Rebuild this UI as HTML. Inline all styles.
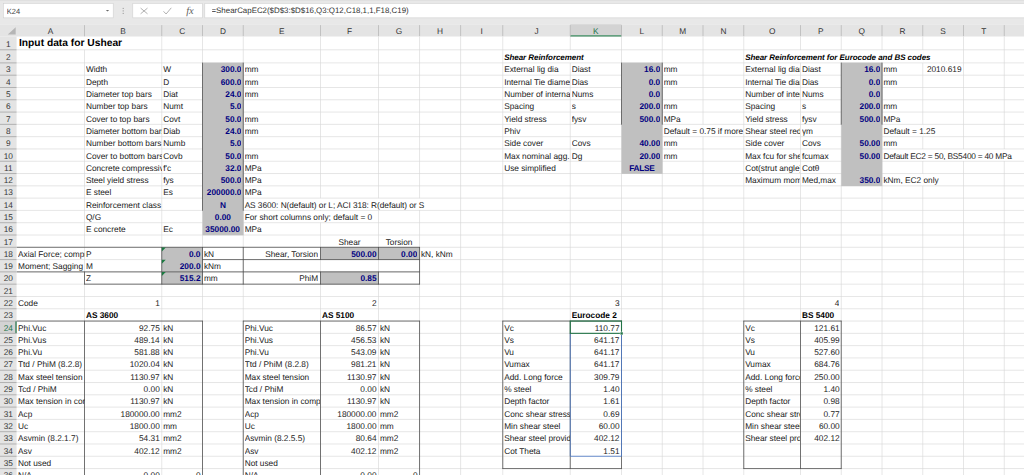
<!DOCTYPE html>
<html lang="en"><head><meta charset="utf-8"><title>Ushear</title>
<style>
html,body{margin:0;padding:0;background:#fff;}
body{width:1024px;height:475px;overflow:hidden;position:relative;font-family:"Liberation Sans",sans-serif;text-rendering:geometricPrecision;}
#s{position:absolute;left:0;top:0;width:1024px;height:475px;overflow:hidden;}
#s svg{position:absolute;left:0;top:0;}
#s div{position:absolute;white-space:nowrap;overflow:hidden;font-size:8.3px;color:#1a1a1a;}
#s .v{font-weight:bold;color:#000080;}
#s .b{font-weight:bold;color:#000;}
#s .bi{font-weight:bold;font-style:italic;color:#000;font-size:8px;letter-spacing:-0.05px;}
#s .hd{color:#363636;}
#s .sel{color:#217346;}
#s .nb{font-size:7.5px;color:#444;}
#s .fx{font-size:7.9px;color:#333;}
#s .fxi{font-family:"Liberation Serif",serif;font-style:italic;font-size:10.4px;color:#5c5c5c;overflow:visible;}
#s .title{font-weight:bold;font-size:10.25px;color:#000;}
</style></head><body><div id="s">
<svg width="1024" height="475" viewBox="0 0 1024 475">
<rect x="0" y="0" width="1024" height="475" fill="#ffffff"/>
<line x1="16.6" y1="49.8" x2="1024" y2="49.8" stroke="#d6d6d6" stroke-width="0.62"/>
<line x1="16.6" y1="62.9" x2="1024" y2="62.9" stroke="#d6d6d6" stroke-width="0.62"/>
<line x1="16.6" y1="75.19" x2="1024" y2="75.19" stroke="#d6d6d6" stroke-width="0.62"/>
<line x1="16.6" y1="87.49" x2="1024" y2="87.49" stroke="#d6d6d6" stroke-width="0.62"/>
<line x1="16.6" y1="99.78" x2="1024" y2="99.78" stroke="#d6d6d6" stroke-width="0.62"/>
<line x1="16.6" y1="112.07" x2="1024" y2="112.07" stroke="#d6d6d6" stroke-width="0.62"/>
<line x1="16.6" y1="124.36" x2="1024" y2="124.36" stroke="#d6d6d6" stroke-width="0.62"/>
<line x1="16.6" y1="136.66" x2="1024" y2="136.66" stroke="#d6d6d6" stroke-width="0.62"/>
<line x1="16.6" y1="148.95" x2="1024" y2="148.95" stroke="#d6d6d6" stroke-width="0.62"/>
<line x1="16.6" y1="161.24" x2="1024" y2="161.24" stroke="#d6d6d6" stroke-width="0.62"/>
<line x1="16.6" y1="173.54" x2="1024" y2="173.54" stroke="#d6d6d6" stroke-width="0.62"/>
<line x1="16.6" y1="185.83" x2="1024" y2="185.83" stroke="#d6d6d6" stroke-width="0.62"/>
<line x1="16.6" y1="198.12" x2="1024" y2="198.12" stroke="#d6d6d6" stroke-width="0.62"/>
<line x1="16.6" y1="210.42" x2="1024" y2="210.42" stroke="#d6d6d6" stroke-width="0.62"/>
<line x1="16.6" y1="222.71" x2="1024" y2="222.71" stroke="#d6d6d6" stroke-width="0.62"/>
<line x1="16.6" y1="235" x2="1024" y2="235" stroke="#d6d6d6" stroke-width="0.62"/>
<line x1="16.6" y1="247.29" x2="1024" y2="247.29" stroke="#d6d6d6" stroke-width="0.62"/>
<line x1="16.6" y1="259.59" x2="1024" y2="259.59" stroke="#d6d6d6" stroke-width="0.62"/>
<line x1="16.6" y1="271.88" x2="1024" y2="271.88" stroke="#d6d6d6" stroke-width="0.62"/>
<line x1="16.6" y1="284.17" x2="1024" y2="284.17" stroke="#d6d6d6" stroke-width="0.62"/>
<line x1="16.6" y1="296.47" x2="1024" y2="296.47" stroke="#d6d6d6" stroke-width="0.62"/>
<line x1="16.6" y1="308.76" x2="1024" y2="308.76" stroke="#d6d6d6" stroke-width="0.62"/>
<line x1="16.6" y1="321.05" x2="1024" y2="321.05" stroke="#d6d6d6" stroke-width="0.62"/>
<line x1="16.6" y1="333.35" x2="1024" y2="333.35" stroke="#d6d6d6" stroke-width="0.62"/>
<line x1="16.6" y1="345.64" x2="1024" y2="345.64" stroke="#d6d6d6" stroke-width="0.62"/>
<line x1="16.6" y1="357.93" x2="1024" y2="357.93" stroke="#d6d6d6" stroke-width="0.62"/>
<line x1="16.6" y1="370.22" x2="1024" y2="370.22" stroke="#d6d6d6" stroke-width="0.62"/>
<line x1="16.6" y1="382.52" x2="1024" y2="382.52" stroke="#d6d6d6" stroke-width="0.62"/>
<line x1="16.6" y1="394.81" x2="1024" y2="394.81" stroke="#d6d6d6" stroke-width="0.62"/>
<line x1="16.6" y1="407.1" x2="1024" y2="407.1" stroke="#d6d6d6" stroke-width="0.62"/>
<line x1="16.6" y1="419.4" x2="1024" y2="419.4" stroke="#d6d6d6" stroke-width="0.62"/>
<line x1="16.6" y1="431.69" x2="1024" y2="431.69" stroke="#d6d6d6" stroke-width="0.62"/>
<line x1="16.6" y1="443.98" x2="1024" y2="443.98" stroke="#d6d6d6" stroke-width="0.62"/>
<line x1="16.6" y1="456.28" x2="1024" y2="456.28" stroke="#d6d6d6" stroke-width="0.62"/>
<line x1="16.6" y1="468.57" x2="1024" y2="468.57" stroke="#d6d6d6" stroke-width="0.62"/>
<line x1="84.5" y1="36.5" x2="84.5" y2="475" stroke="#d6d6d6" stroke-width="0.62"/>
<line x1="161.75" y1="36.5" x2="161.75" y2="475" stroke="#d6d6d6" stroke-width="0.62"/>
<line x1="202.5" y1="36.5" x2="202.5" y2="475" stroke="#d6d6d6" stroke-width="0.62"/>
<line x1="243.25" y1="36.5" x2="243.25" y2="475" stroke="#d6d6d6" stroke-width="0.62"/>
<line x1="320.5" y1="36.5" x2="320.5" y2="475" stroke="#d6d6d6" stroke-width="0.62"/>
<line x1="378.5" y1="36.5" x2="378.5" y2="475" stroke="#d6d6d6" stroke-width="0.62"/>
<line x1="419.55" y1="36.5" x2="419.55" y2="475" stroke="#d6d6d6" stroke-width="0.62"/>
<line x1="460.6" y1="36.5" x2="460.6" y2="475" stroke="#d6d6d6" stroke-width="0.62"/>
<line x1="502.75" y1="36.5" x2="502.75" y2="475" stroke="#d6d6d6" stroke-width="0.62"/>
<line x1="570.25" y1="36.5" x2="570.25" y2="475" stroke="#d6d6d6" stroke-width="0.62"/>
<line x1="621.5" y1="36.5" x2="621.5" y2="475" stroke="#d6d6d6" stroke-width="0.62"/>
<line x1="662.25" y1="36.5" x2="662.25" y2="475" stroke="#d6d6d6" stroke-width="0.62"/>
<line x1="703" y1="36.5" x2="703" y2="475" stroke="#d6d6d6" stroke-width="0.62"/>
<line x1="743.75" y1="36.5" x2="743.75" y2="475" stroke="#d6d6d6" stroke-width="0.62"/>
<line x1="800.5" y1="36.5" x2="800.5" y2="475" stroke="#d6d6d6" stroke-width="0.62"/>
<line x1="841.25" y1="36.5" x2="841.25" y2="475" stroke="#d6d6d6" stroke-width="0.62"/>
<line x1="882" y1="36.5" x2="882" y2="475" stroke="#d6d6d6" stroke-width="0.62"/>
<line x1="922.75" y1="36.5" x2="922.75" y2="475" stroke="#d6d6d6" stroke-width="0.62"/>
<line x1="963.5" y1="36.5" x2="963.5" y2="475" stroke="#d6d6d6" stroke-width="0.62"/>
<line x1="1004.25" y1="36.5" x2="1004.25" y2="475" stroke="#d6d6d6" stroke-width="0.62"/>
<rect x="83.7" y="37" width="1.6" height="12.3" fill="#ffffff"/>
<rect x="569.45" y="50.3" width="1.6" height="12.1" fill="#ffffff"/>
<rect x="799.7" y="50.3" width="1.6" height="12.1" fill="#ffffff"/>
<rect x="840.45" y="50.3" width="1.6" height="12.1" fill="#ffffff"/>
<rect x="881.2" y="50.3" width="1.6" height="12.1" fill="#ffffff"/>
<rect x="921.95" y="50.3" width="1.6" height="12.1" fill="#ffffff"/>
<rect x="702.2" y="124.86" width="1.6" height="11.29" fill="#ffffff"/>
<rect x="921.95" y="124.86" width="1.6" height="11.29" fill="#ffffff"/>
<rect x="921.95" y="149.45" width="1.6" height="11.29" fill="#ffffff"/>
<rect x="962.7" y="149.45" width="1.6" height="11.29" fill="#ffffff"/>
<rect x="1003.45" y="149.45" width="1.6" height="11.29" fill="#ffffff"/>
<rect x="319.7" y="210.92" width="1.6" height="11.29" fill="#ffffff"/>
<rect x="921.95" y="174.04" width="1.6" height="11.29" fill="#ffffff"/>
<rect x="319.7" y="198.62" width="1.6" height="11.29" fill="#ffffff"/>
<rect x="377.7" y="198.62" width="1.6" height="11.29" fill="#ffffff"/>
<rect x="418.75" y="198.62" width="1.6" height="11.29" fill="#ffffff"/>
<rect x="202.5" y="62.6" width="41.05" height="172.7" fill="#c0c0c0"/>
<rect x="621.5" y="62.6" width="41.05" height="111.24" fill="#c0c0c0"/>
<rect x="841.25" y="62.6" width="41.05" height="123.53" fill="#c0c0c0"/>
<rect x="161.75" y="246.99" width="41.05" height="37.48" fill="#c0c0c0"/>
<rect x="320.5" y="246.99" width="58.3" height="12.89" fill="#c0c0c0"/>
<rect x="378.5" y="246.99" width="41.35" height="12.89" fill="#c0c0c0"/>
<rect x="320.5" y="271.58" width="58.3" height="12.89" fill="#c0c0c0"/>
<line x1="202.5" y1="62.6" x2="202.5" y2="210.72" stroke="#4a4a4a" stroke-width="0.75"/>
<line x1="243.25" y1="62.6" x2="243.25" y2="210.72" stroke="#4a4a4a" stroke-width="0.75"/>
<line x1="621.5" y1="62.6" x2="621.5" y2="124.66" stroke="#4a4a4a" stroke-width="0.75"/>
<line x1="662.25" y1="62.6" x2="662.25" y2="124.66" stroke="#4a4a4a" stroke-width="0.75"/>
<line x1="841.25" y1="62.6" x2="841.25" y2="124.66" stroke="#4a4a4a" stroke-width="0.75"/>
<line x1="882" y1="62.6" x2="882" y2="124.66" stroke="#4a4a4a" stroke-width="0.75"/>
<line x1="16.3" y1="247.29" x2="419.85" y2="247.29" stroke="#4a4a4a" stroke-width="0.75"/>
<line x1="202.2" y1="259.59" x2="419.85" y2="259.59" stroke="#4a4a4a" stroke-width="0.75"/>
<line x1="16.3" y1="271.88" x2="419.85" y2="271.88" stroke="#4a4a4a" stroke-width="0.75"/>
<line x1="84.2" y1="284.17" x2="419.85" y2="284.17" stroke="#4a4a4a" stroke-width="0.75"/>
<line x1="84.5" y1="271.58" x2="84.5" y2="284.47" stroke="#4a4a4a" stroke-width="0.75"/>
<line x1="161.75" y1="246.99" x2="161.75" y2="284.47" stroke="#4a4a4a" stroke-width="0.75"/>
<line x1="202.5" y1="246.99" x2="202.5" y2="284.47" stroke="#4a4a4a" stroke-width="0.75"/>
<line x1="243.25" y1="246.99" x2="243.25" y2="284.47" stroke="#4a4a4a" stroke-width="0.75"/>
<line x1="320.5" y1="246.99" x2="320.5" y2="259.89" stroke="#4a4a4a" stroke-width="0.75"/>
<line x1="320.5" y1="271.58" x2="320.5" y2="284.47" stroke="#4a4a4a" stroke-width="0.75"/>
<line x1="378.5" y1="246.99" x2="378.5" y2="259.89" stroke="#4a4a4a" stroke-width="0.75"/>
<line x1="378.5" y1="271.58" x2="378.5" y2="284.47" stroke="#4a4a4a" stroke-width="0.75"/>
<line x1="419.55" y1="246.99" x2="419.55" y2="284.47" stroke="#4a4a4a" stroke-width="0.75"/>
<line x1="16.3" y1="321.05" x2="202.8" y2="321.05" stroke="#4a4a4a" stroke-width="0.75"/>
<line x1="84.5" y1="320.75" x2="84.5" y2="493.45" stroke="#4a4a4a" stroke-width="0.75"/>
<line x1="202.5" y1="320.75" x2="202.5" y2="493.45" stroke="#4a4a4a" stroke-width="0.75"/>
<line x1="242.95" y1="321.05" x2="419.85" y2="321.05" stroke="#4a4a4a" stroke-width="0.75"/>
<line x1="243.25" y1="320.75" x2="243.25" y2="493.45" stroke="#4a4a4a" stroke-width="0.75"/>
<line x1="320.5" y1="320.75" x2="320.5" y2="493.45" stroke="#4a4a4a" stroke-width="0.75"/>
<line x1="419.55" y1="320.75" x2="419.55" y2="493.45" stroke="#4a4a4a" stroke-width="0.75"/>
<line x1="502.45" y1="321.05" x2="621.8" y2="321.05" stroke="#4a4a4a" stroke-width="0.75"/>
<line x1="502.45" y1="468.57" x2="621.8" y2="468.57" stroke="#4a4a4a" stroke-width="0.75"/>
<line x1="502.75" y1="320.75" x2="502.75" y2="468.87" stroke="#4a4a4a" stroke-width="0.75"/>
<line x1="570.25" y1="320.75" x2="570.25" y2="468.87" stroke="#4a4a4a" stroke-width="0.75"/>
<line x1="621.5" y1="320.75" x2="621.5" y2="468.87" stroke="#4a4a4a" stroke-width="0.75"/>
<line x1="743.45" y1="321.05" x2="841.55" y2="321.05" stroke="#4a4a4a" stroke-width="0.75"/>
<line x1="743.45" y1="468.57" x2="841.55" y2="468.57" stroke="#4a4a4a" stroke-width="0.75"/>
<line x1="743.75" y1="320.75" x2="743.75" y2="468.87" stroke="#4a4a4a" stroke-width="0.75"/>
<line x1="800.5" y1="320.75" x2="800.5" y2="468.87" stroke="#4a4a4a" stroke-width="0.75"/>
<line x1="841.25" y1="320.75" x2="841.25" y2="468.87" stroke="#4a4a4a" stroke-width="0.75"/>
<line x1="570.25" y1="333.35" x2="570.25" y2="456.28" stroke="#4a78c8" stroke-width="0.8"/>
<line x1="621.5" y1="333.35" x2="621.5" y2="456.28" stroke="#4a78c8" stroke-width="0.8"/>
<line x1="570.25" y1="456.28" x2="621.5" y2="456.28" stroke="#4a78c8" stroke-width="0.8"/>
<rect x="570.25" y="321.05" width="51.25" height="12.29" fill="none" stroke="#217346" stroke-width="1.1"/>
<rect x="619.9" y="331.75" width="3.2" height="3.2" fill="#ffffff"/>
<rect x="620.4" y="332.25" width="2.4" height="2.4" fill="#217346"/>
<path d="M161.85 247.49h3.9l-3.9 3.9z" fill="#1a7a40"/>
<path d="M161.85 259.79h3.9l-3.9 3.9z" fill="#1a7a40"/>
<path d="M161.85 272.08h3.9l-3.9 3.9z" fill="#1a7a40"/>
<rect x="0" y="0" width="1024" height="24.3" fill="#e8e8e8"/>
<rect x="0" y="0" width="1024" height="0.9" fill="#dfdfdf"/>
<rect x="0" y="24.3" width="1024" height="12.2" fill="#e4e4e4"/>
<rect x="0" y="36.5" width="16.6" height="438.5" fill="#e4e4e4"/>
<rect x="3.3" y="3.3" width="109.9" height="14.55" fill="#ffffff" stroke="#d0d0d0" stroke-width="0.6"/>
<rect x="132.8" y="3.3" width="69.6" height="14.55" fill="#ffffff" stroke="#d0d0d0" stroke-width="0.6"/>
<rect x="204.8" y="3.3" width="821.2" height="14.55" fill="#ffffff" stroke="#d0d0d0" stroke-width="0.6"/>
<path d="M105.8 9.9h3.4l-1.7 1.7z" fill="#6a6a6a"/>
<rect x="122.7" y="7.9" width="1" height="1" fill="#8c8c8c"/>
<rect x="122.7" y="10.4" width="1" height="1" fill="#8c8c8c"/>
<rect x="122.7" y="12.9" width="1" height="1" fill="#8c8c8c"/>
<path d="M140.6 8.1l6.9 5.7M147.5 8.1l-6.9 5.7" stroke="#b2b2b2" stroke-width="1" fill="none"/>
<path d="M163.5 11.3l2.6 2.7l5.2-6.2" stroke="#b2b2b2" stroke-width="1" fill="none"/>
<rect x="570.25" y="24.3" width="51.25" height="12.2" fill="#d3d3d3"/>
<line x1="570.25" y1="35.95" x2="621.5" y2="35.95" stroke="#3f8f63" stroke-width="1.25"/>
<rect x="0" y="321.05" width="16.6" height="12.29" fill="#d3d3d3"/>
<line x1="16" y1="321.05" x2="16" y2="333.35" stroke="#217346" stroke-width="1.2"/>
<line x1="84.5" y1="25.1" x2="84.5" y2="36.2" stroke="#b2b2b2" stroke-width="0.72"/>
<line x1="161.75" y1="25.1" x2="161.75" y2="36.2" stroke="#b2b2b2" stroke-width="0.72"/>
<line x1="202.5" y1="25.1" x2="202.5" y2="36.2" stroke="#b2b2b2" stroke-width="0.72"/>
<line x1="243.25" y1="25.1" x2="243.25" y2="36.2" stroke="#b2b2b2" stroke-width="0.72"/>
<line x1="320.5" y1="25.1" x2="320.5" y2="36.2" stroke="#b2b2b2" stroke-width="0.72"/>
<line x1="378.5" y1="25.1" x2="378.5" y2="36.2" stroke="#b2b2b2" stroke-width="0.72"/>
<line x1="419.55" y1="25.1" x2="419.55" y2="36.2" stroke="#b2b2b2" stroke-width="0.72"/>
<line x1="460.6" y1="25.1" x2="460.6" y2="36.2" stroke="#b2b2b2" stroke-width="0.72"/>
<line x1="502.75" y1="25.1" x2="502.75" y2="36.2" stroke="#b2b2b2" stroke-width="0.72"/>
<line x1="570.25" y1="25.1" x2="570.25" y2="36.2" stroke="#b2b2b2" stroke-width="0.72"/>
<line x1="621.5" y1="25.1" x2="621.5" y2="36.2" stroke="#b2b2b2" stroke-width="0.72"/>
<line x1="662.25" y1="25.1" x2="662.25" y2="36.2" stroke="#b2b2b2" stroke-width="0.72"/>
<line x1="703" y1="25.1" x2="703" y2="36.2" stroke="#b2b2b2" stroke-width="0.72"/>
<line x1="743.75" y1="25.1" x2="743.75" y2="36.2" stroke="#b2b2b2" stroke-width="0.72"/>
<line x1="800.5" y1="25.1" x2="800.5" y2="36.2" stroke="#b2b2b2" stroke-width="0.72"/>
<line x1="841.25" y1="25.1" x2="841.25" y2="36.2" stroke="#b2b2b2" stroke-width="0.72"/>
<line x1="882" y1="25.1" x2="882" y2="36.2" stroke="#b2b2b2" stroke-width="0.72"/>
<line x1="922.75" y1="25.1" x2="922.75" y2="36.2" stroke="#b2b2b2" stroke-width="0.72"/>
<line x1="963.5" y1="25.1" x2="963.5" y2="36.2" stroke="#b2b2b2" stroke-width="0.72"/>
<line x1="1004.25" y1="25.1" x2="1004.25" y2="36.2" stroke="#b2b2b2" stroke-width="0.72"/>
<line x1="0" y1="49.8" x2="16.6" y2="49.8" stroke="#a8a8a8" stroke-width="0.85"/>
<line x1="0" y1="62.9" x2="16.6" y2="62.9" stroke="#a8a8a8" stroke-width="0.85"/>
<line x1="0" y1="75.19" x2="16.6" y2="75.19" stroke="#a8a8a8" stroke-width="0.85"/>
<line x1="0" y1="87.49" x2="16.6" y2="87.49" stroke="#a8a8a8" stroke-width="0.85"/>
<line x1="0" y1="99.78" x2="16.6" y2="99.78" stroke="#a8a8a8" stroke-width="0.85"/>
<line x1="0" y1="112.07" x2="16.6" y2="112.07" stroke="#a8a8a8" stroke-width="0.85"/>
<line x1="0" y1="124.36" x2="16.6" y2="124.36" stroke="#a8a8a8" stroke-width="0.85"/>
<line x1="0" y1="136.66" x2="16.6" y2="136.66" stroke="#a8a8a8" stroke-width="0.85"/>
<line x1="0" y1="148.95" x2="16.6" y2="148.95" stroke="#a8a8a8" stroke-width="0.85"/>
<line x1="0" y1="161.24" x2="16.6" y2="161.24" stroke="#a8a8a8" stroke-width="0.85"/>
<line x1="0" y1="173.54" x2="16.6" y2="173.54" stroke="#a8a8a8" stroke-width="0.85"/>
<line x1="0" y1="185.83" x2="16.6" y2="185.83" stroke="#a8a8a8" stroke-width="0.85"/>
<line x1="0" y1="198.12" x2="16.6" y2="198.12" stroke="#a8a8a8" stroke-width="0.85"/>
<line x1="0" y1="210.42" x2="16.6" y2="210.42" stroke="#a8a8a8" stroke-width="0.85"/>
<line x1="0" y1="222.71" x2="16.6" y2="222.71" stroke="#a8a8a8" stroke-width="0.85"/>
<line x1="0" y1="235" x2="16.6" y2="235" stroke="#a8a8a8" stroke-width="0.85"/>
<line x1="0" y1="247.29" x2="16.6" y2="247.29" stroke="#a8a8a8" stroke-width="0.85"/>
<line x1="0" y1="259.59" x2="16.6" y2="259.59" stroke="#a8a8a8" stroke-width="0.85"/>
<line x1="0" y1="271.88" x2="16.6" y2="271.88" stroke="#a8a8a8" stroke-width="0.85"/>
<line x1="0" y1="284.17" x2="16.6" y2="284.17" stroke="#a8a8a8" stroke-width="0.85"/>
<line x1="0" y1="296.47" x2="16.6" y2="296.47" stroke="#a8a8a8" stroke-width="0.85"/>
<line x1="0" y1="308.76" x2="16.6" y2="308.76" stroke="#a8a8a8" stroke-width="0.85"/>
<line x1="0" y1="321.05" x2="16.6" y2="321.05" stroke="#a8a8a8" stroke-width="0.85"/>
<line x1="0" y1="333.35" x2="16.6" y2="333.35" stroke="#a8a8a8" stroke-width="0.85"/>
<line x1="0" y1="345.64" x2="16.6" y2="345.64" stroke="#a8a8a8" stroke-width="0.85"/>
<line x1="0" y1="357.93" x2="16.6" y2="357.93" stroke="#a8a8a8" stroke-width="0.85"/>
<line x1="0" y1="370.22" x2="16.6" y2="370.22" stroke="#a8a8a8" stroke-width="0.85"/>
<line x1="0" y1="382.52" x2="16.6" y2="382.52" stroke="#a8a8a8" stroke-width="0.85"/>
<line x1="0" y1="394.81" x2="16.6" y2="394.81" stroke="#a8a8a8" stroke-width="0.85"/>
<line x1="0" y1="407.1" x2="16.6" y2="407.1" stroke="#a8a8a8" stroke-width="0.85"/>
<line x1="0" y1="419.4" x2="16.6" y2="419.4" stroke="#a8a8a8" stroke-width="0.85"/>
<line x1="0" y1="431.69" x2="16.6" y2="431.69" stroke="#a8a8a8" stroke-width="0.85"/>
<line x1="0" y1="443.98" x2="16.6" y2="443.98" stroke="#a8a8a8" stroke-width="0.85"/>
<line x1="0" y1="456.28" x2="16.6" y2="456.28" stroke="#a8a8a8" stroke-width="0.85"/>
<line x1="0" y1="468.57" x2="16.6" y2="468.57" stroke="#a8a8a8" stroke-width="0.85"/>
<path d="M15.7 27.2v7.4h-7.9z" fill="#b5b5b5"/>
</svg>
<div class="hd" style="left:16.6px;top:24.9px;width:67.9px;height:12.2px;line-height:12.2px;text-align:center;">A</div>
<div class="hd" style="left:84.5px;top:24.9px;width:77.25px;height:12.2px;line-height:12.2px;text-align:center;">B</div>
<div class="hd" style="left:161.75px;top:24.9px;width:40.75px;height:12.2px;line-height:12.2px;text-align:center;">C</div>
<div class="hd" style="left:202.5px;top:24.9px;width:40.75px;height:12.2px;line-height:12.2px;text-align:center;">D</div>
<div class="hd" style="left:243.25px;top:24.9px;width:77.25px;height:12.2px;line-height:12.2px;text-align:center;">E</div>
<div class="hd" style="left:320.5px;top:24.9px;width:58px;height:12.2px;line-height:12.2px;text-align:center;">F</div>
<div class="hd" style="left:378.5px;top:24.9px;width:41.05px;height:12.2px;line-height:12.2px;text-align:center;">G</div>
<div class="hd" style="left:419.55px;top:24.9px;width:41.05px;height:12.2px;line-height:12.2px;text-align:center;">H</div>
<div class="hd" style="left:460.6px;top:24.9px;width:42.15px;height:12.2px;line-height:12.2px;text-align:center;">I</div>
<div class="hd" style="left:502.75px;top:24.9px;width:67.5px;height:12.2px;line-height:12.2px;text-align:center;">J</div>
<div class="hd sel" style="left:570.25px;top:24.9px;width:51.25px;height:12.2px;line-height:12.2px;text-align:center;">K</div>
<div class="hd" style="left:621.5px;top:24.9px;width:40.75px;height:12.2px;line-height:12.2px;text-align:center;">L</div>
<div class="hd" style="left:662.25px;top:24.9px;width:40.75px;height:12.2px;line-height:12.2px;text-align:center;">M</div>
<div class="hd" style="left:703px;top:24.9px;width:40.75px;height:12.2px;line-height:12.2px;text-align:center;">N</div>
<div class="hd" style="left:743.75px;top:24.9px;width:56.75px;height:12.2px;line-height:12.2px;text-align:center;">O</div>
<div class="hd" style="left:800.5px;top:24.9px;width:40.75px;height:12.2px;line-height:12.2px;text-align:center;">P</div>
<div class="hd" style="left:841.25px;top:24.9px;width:40.75px;height:12.2px;line-height:12.2px;text-align:center;">Q</div>
<div class="hd" style="left:882px;top:24.9px;width:40.75px;height:12.2px;line-height:12.2px;text-align:center;">R</div>
<div class="hd" style="left:922.75px;top:24.9px;width:40.75px;height:12.2px;line-height:12.2px;text-align:center;">S</div>
<div class="hd" style="left:963.5px;top:24.9px;width:40.75px;height:12.2px;line-height:12.2px;text-align:center;">T</div>
<div class="hd" style="left:0px;top:37.95px;width:16.6px;height:13.3px;line-height:13.3px;text-align:center;">1</div>
<div class="hd" style="left:0px;top:51.25px;width:16.6px;height:13.1px;line-height:13.1px;text-align:center;">2</div>
<div class="hd" style="left:0px;top:63.45px;width:16.6px;height:12.29px;line-height:12.29px;text-align:center;">3</div>
<div class="hd" style="left:0px;top:75.74px;width:16.6px;height:12.29px;line-height:12.29px;text-align:center;">4</div>
<div class="hd" style="left:0px;top:88.04px;width:16.6px;height:12.29px;line-height:12.29px;text-align:center;">5</div>
<div class="hd" style="left:0px;top:100.33px;width:16.6px;height:12.29px;line-height:12.29px;text-align:center;">6</div>
<div class="hd" style="left:0px;top:112.62px;width:16.6px;height:12.29px;line-height:12.29px;text-align:center;">7</div>
<div class="hd" style="left:0px;top:124.91px;width:16.6px;height:12.29px;line-height:12.29px;text-align:center;">8</div>
<div class="hd" style="left:0px;top:137.21px;width:16.6px;height:12.29px;line-height:12.29px;text-align:center;">9</div>
<div class="hd" style="left:0px;top:149.5px;width:16.6px;height:12.29px;line-height:12.29px;text-align:center;">10</div>
<div class="hd" style="left:0px;top:161.79px;width:16.6px;height:12.29px;line-height:12.29px;text-align:center;">11</div>
<div class="hd" style="left:0px;top:174.09px;width:16.6px;height:12.29px;line-height:12.29px;text-align:center;">12</div>
<div class="hd" style="left:0px;top:186.38px;width:16.6px;height:12.29px;line-height:12.29px;text-align:center;">13</div>
<div class="hd" style="left:0px;top:198.67px;width:16.6px;height:12.29px;line-height:12.29px;text-align:center;">14</div>
<div class="hd" style="left:0px;top:210.97px;width:16.6px;height:12.29px;line-height:12.29px;text-align:center;">15</div>
<div class="hd" style="left:0px;top:223.26px;width:16.6px;height:12.29px;line-height:12.29px;text-align:center;">16</div>
<div class="hd" style="left:0px;top:235.55px;width:16.6px;height:12.29px;line-height:12.29px;text-align:center;">17</div>
<div class="hd" style="left:0px;top:247.84px;width:16.6px;height:12.29px;line-height:12.29px;text-align:center;">18</div>
<div class="hd" style="left:0px;top:260.14px;width:16.6px;height:12.29px;line-height:12.29px;text-align:center;">19</div>
<div class="hd" style="left:0px;top:272.43px;width:16.6px;height:12.29px;line-height:12.29px;text-align:center;">20</div>
<div class="hd" style="left:0px;top:284.72px;width:16.6px;height:12.29px;line-height:12.29px;text-align:center;">21</div>
<div class="hd" style="left:0px;top:297.02px;width:16.6px;height:12.29px;line-height:12.29px;text-align:center;">22</div>
<div class="hd" style="left:0px;top:309.31px;width:16.6px;height:12.29px;line-height:12.29px;text-align:center;">23</div>
<div class="hd sel" style="left:0px;top:321.6px;width:16.6px;height:12.29px;line-height:12.29px;text-align:center;">24</div>
<div class="hd" style="left:0px;top:333.9px;width:16.6px;height:12.29px;line-height:12.29px;text-align:center;">25</div>
<div class="hd" style="left:0px;top:346.19px;width:16.6px;height:12.29px;line-height:12.29px;text-align:center;">26</div>
<div class="hd" style="left:0px;top:358.48px;width:16.6px;height:12.29px;line-height:12.29px;text-align:center;">27</div>
<div class="hd" style="left:0px;top:370.77px;width:16.6px;height:12.29px;line-height:12.29px;text-align:center;">28</div>
<div class="hd" style="left:0px;top:383.07px;width:16.6px;height:12.29px;line-height:12.29px;text-align:center;">29</div>
<div class="hd" style="left:0px;top:395.36px;width:16.6px;height:12.29px;line-height:12.29px;text-align:center;">30</div>
<div class="hd" style="left:0px;top:407.65px;width:16.6px;height:12.29px;line-height:12.29px;text-align:center;">31</div>
<div class="hd" style="left:0px;top:419.95px;width:16.6px;height:12.29px;line-height:12.29px;text-align:center;">32</div>
<div class="hd" style="left:0px;top:432.24px;width:16.6px;height:12.29px;line-height:12.29px;text-align:center;">33</div>
<div class="hd" style="left:0px;top:444.53px;width:16.6px;height:12.29px;line-height:12.29px;text-align:center;">34</div>
<div class="hd" style="left:0px;top:456.83px;width:16.6px;height:12.29px;line-height:12.29px;text-align:center;">35</div>
<div class="hd" style="left:0px;top:469.12px;width:16.6px;height:12.29px;line-height:12.29px;text-align:center;">36</div>
<div class="nb" style="left:6.8px;top:4.7px;width:80px;height:14.3px;line-height:14.3px;">K24</div>
<div class="fx" style="left:211.5px;top:4.3px;width:400px;height:14.3px;line-height:14.3px;">=ShearCapEC2($D$3:$D$16,Q3:Q12,C18,1,1,F18,C19)</div>
<div class="fxi" style="left:186.2px;top:4.5px;width:12px;height:14.5px;line-height:14.5px;">fx</div>
<div class="title" style="left:19px;top:37.2px;width:200px;height:13.3px;line-height:13.3px;overflow:visible;">Input data for Ushear</div>
<div style="left:85.9px;top:63.45px;width:75.85px;height:12.29px;line-height:12.29px;">Width</div>
<div style="left:163.15px;top:63.45px;width:39.35px;height:12.29px;line-height:12.29px;">W</div>
<div class="v" style="left:202.5px;top:63.45px;width:38.95px;height:12.29px;line-height:12.29px;text-align:right;">300.0</div>
<div style="left:244.65px;top:63.45px;width:75.85px;height:12.29px;line-height:12.29px;">mm</div>
<div style="left:85.9px;top:75.74px;width:75.85px;height:12.29px;line-height:12.29px;">Depth</div>
<div style="left:163.15px;top:75.74px;width:39.35px;height:12.29px;line-height:12.29px;">D</div>
<div class="v" style="left:202.5px;top:75.74px;width:38.95px;height:12.29px;line-height:12.29px;text-align:right;">600.0</div>
<div style="left:244.65px;top:75.74px;width:75.85px;height:12.29px;line-height:12.29px;">mm</div>
<div style="left:85.9px;top:88.04px;width:75.85px;height:12.29px;line-height:12.29px;">Diameter top bars</div>
<div style="left:163.15px;top:88.04px;width:39.35px;height:12.29px;line-height:12.29px;">Diat</div>
<div class="v" style="left:202.5px;top:88.04px;width:38.95px;height:12.29px;line-height:12.29px;text-align:right;">24.0</div>
<div style="left:244.65px;top:88.04px;width:75.85px;height:12.29px;line-height:12.29px;">mm</div>
<div style="left:85.9px;top:100.33px;width:75.85px;height:12.29px;line-height:12.29px;">Number top bars</div>
<div style="left:163.15px;top:100.33px;width:39.35px;height:12.29px;line-height:12.29px;">Numt</div>
<div class="v" style="left:202.5px;top:100.33px;width:38.95px;height:12.29px;line-height:12.29px;text-align:right;">5.0</div>
<div style="left:85.9px;top:112.62px;width:75.85px;height:12.29px;line-height:12.29px;">Cover to top bars</div>
<div style="left:163.15px;top:112.62px;width:39.35px;height:12.29px;line-height:12.29px;">Covt</div>
<div class="v" style="left:202.5px;top:112.62px;width:38.95px;height:12.29px;line-height:12.29px;text-align:right;">50.0</div>
<div style="left:244.65px;top:112.62px;width:75.85px;height:12.29px;line-height:12.29px;">mm</div>
<div style="left:85.9px;top:124.91px;width:75.85px;height:12.29px;line-height:12.29px;">Diameter bottom bars</div>
<div style="left:163.15px;top:124.91px;width:39.35px;height:12.29px;line-height:12.29px;">Diab</div>
<div class="v" style="left:202.5px;top:124.91px;width:38.95px;height:12.29px;line-height:12.29px;text-align:right;">24.0</div>
<div style="left:244.65px;top:124.91px;width:75.85px;height:12.29px;line-height:12.29px;">mm</div>
<div style="left:85.9px;top:137.21px;width:75.85px;height:12.29px;line-height:12.29px;">Number bottom bars</div>
<div style="left:163.15px;top:137.21px;width:39.35px;height:12.29px;line-height:12.29px;">Numb</div>
<div class="v" style="left:202.5px;top:137.21px;width:38.95px;height:12.29px;line-height:12.29px;text-align:right;">5.0</div>
<div style="left:85.9px;top:149.5px;width:75.85px;height:12.29px;line-height:12.29px;">Cover to bottom bars</div>
<div style="left:163.15px;top:149.5px;width:39.35px;height:12.29px;line-height:12.29px;">Covb</div>
<div class="v" style="left:202.5px;top:149.5px;width:38.95px;height:12.29px;line-height:12.29px;text-align:right;">50.0</div>
<div style="left:244.65px;top:149.5px;width:75.85px;height:12.29px;line-height:12.29px;">mm</div>
<div style="left:85.9px;top:161.79px;width:75.85px;height:12.29px;line-height:12.29px;">Concrete compressive strength</div>
<div style="left:163.15px;top:161.79px;width:39.35px;height:12.29px;line-height:12.29px;">f'c</div>
<div class="v" style="left:202.5px;top:161.79px;width:38.95px;height:12.29px;line-height:12.29px;text-align:right;">32.0</div>
<div style="left:244.65px;top:161.79px;width:75.85px;height:12.29px;line-height:12.29px;">MPa</div>
<div style="left:85.9px;top:174.09px;width:75.85px;height:12.29px;line-height:12.29px;">Steel yield stress</div>
<div style="left:163.15px;top:174.09px;width:39.35px;height:12.29px;line-height:12.29px;">fys</div>
<div class="v" style="left:202.5px;top:174.09px;width:38.95px;height:12.29px;line-height:12.29px;text-align:right;">500.0</div>
<div style="left:244.65px;top:174.09px;width:75.85px;height:12.29px;line-height:12.29px;">MPa</div>
<div style="left:85.9px;top:186.38px;width:75.85px;height:12.29px;line-height:12.29px;">E steel</div>
<div style="left:163.15px;top:186.38px;width:39.35px;height:12.29px;line-height:12.29px;">Es</div>
<div class="v" style="left:202.5px;top:186.38px;width:38.95px;height:12.29px;line-height:12.29px;text-align:right;">200000.0</div>
<div style="left:244.65px;top:186.38px;width:75.85px;height:12.29px;line-height:12.29px;">MPa</div>
<div style="left:85.9px;top:223.26px;width:75.85px;height:12.29px;line-height:12.29px;">E concrete</div>
<div style="left:163.15px;top:223.26px;width:39.35px;height:12.29px;line-height:12.29px;">Ec</div>
<div class="v" style="left:202.5px;top:223.26px;width:37.45px;height:12.29px;line-height:12.29px;text-align:right;">35000.00</div>
<div style="left:244.65px;top:223.26px;width:75.85px;height:12.29px;line-height:12.29px;">MPa</div>
<div style="left:85.9px;top:198.67px;width:75.85px;height:12.29px;line-height:12.29px;">Reinforcement class</div>
<div class="v" style="left:202.5px;top:198.67px;width:40.75px;height:12.29px;line-height:12.29px;text-align:center;">N</div>
<div style="left:244.65px;top:198.67px;width:215.95px;height:12.29px;line-height:12.29px;overflow:visible;letter-spacing:-0.05px;">AS 3600: N(default) or L; ACI 318: R(default) or S</div>
<div style="left:85.9px;top:210.97px;width:75.85px;height:12.29px;line-height:12.29px;">Q/G</div>
<div class="v" style="left:202.5px;top:210.97px;width:40.75px;height:12.29px;line-height:12.29px;text-align:center;">0.00</div>
<div style="left:244.65px;top:210.97px;width:174.9px;height:12.29px;line-height:12.29px;overflow:visible;">For short columns only; default = 0</div>
<div style="left:320.5px;top:235.55px;width:58px;height:12.29px;line-height:12.29px;text-align:center;">Shear</div>
<div style="left:378.5px;top:235.55px;width:41.05px;height:12.29px;line-height:12.29px;text-align:center;">Torsion</div>
<div style="left:18px;top:247.84px;width:66.5px;height:12.29px;line-height:12.29px;">Axial Force; compression positive</div>
<div style="left:85.9px;top:247.84px;width:75.85px;height:12.29px;line-height:12.29px;">P</div>
<div class="v" style="left:161.75px;top:247.84px;width:38.75px;height:12.29px;line-height:12.29px;text-align:right;">0.0</div>
<div style="left:203.9px;top:247.84px;width:39.35px;height:12.29px;line-height:12.29px;">kN</div>
<div style="left:243.25px;top:247.84px;width:74.85px;height:12.29px;line-height:12.29px;text-align:right;">Shear, Torsion</div>
<div class="v" style="left:320.5px;top:247.84px;width:56.1px;height:12.29px;line-height:12.29px;text-align:right;">500.00</div>
<div class="v" style="left:378.5px;top:247.84px;width:38.75px;height:12.29px;line-height:12.29px;text-align:right;">0.00</div>
<div style="left:420.95px;top:247.84px;width:39.65px;height:12.29px;line-height:12.29px;overflow:visible;">kN, kNm</div>
<div style="left:18px;top:260.14px;width:66.5px;height:12.29px;line-height:12.29px;">Moment; Sagging positive</div>
<div style="left:85.9px;top:260.14px;width:75.85px;height:12.29px;line-height:12.29px;">M</div>
<div class="v" style="left:161.75px;top:260.14px;width:38.75px;height:12.29px;line-height:12.29px;text-align:right;">200.0</div>
<div style="left:203.9px;top:260.14px;width:39.35px;height:12.29px;line-height:12.29px;">kNm</div>
<div style="left:85.9px;top:272.43px;width:75.85px;height:12.29px;line-height:12.29px;">Z</div>
<div class="v" style="left:161.75px;top:272.43px;width:38.75px;height:12.29px;line-height:12.29px;text-align:right;">515.2</div>
<div style="left:203.9px;top:272.43px;width:39.35px;height:12.29px;line-height:12.29px;">mm</div>
<div style="left:243.25px;top:272.43px;width:74.85px;height:12.29px;line-height:12.29px;text-align:right;">PhiM</div>
<div class="v" style="left:320.5px;top:272.43px;width:56.1px;height:12.29px;line-height:12.29px;text-align:right;">0.85</div>
<div style="left:18px;top:297.02px;width:66.5px;height:12.29px;line-height:12.29px;">Code</div>
<div style="left:84.5px;top:297.02px;width:75.25px;height:12.29px;line-height:12.29px;text-align:right;">1</div>
<div style="left:320.5px;top:297.02px;width:56px;height:12.29px;line-height:12.29px;text-align:right;">2</div>
<div style="left:570.25px;top:297.02px;width:49.25px;height:12.29px;line-height:12.29px;text-align:right;">3</div>
<div style="left:800.5px;top:297.02px;width:38.75px;height:12.29px;line-height:12.29px;text-align:right;">4</div>
<div class="b" style="left:85.9px;top:309.31px;width:75.85px;height:12.29px;line-height:12.29px;">AS 3600</div>
<div class="b" style="left:321.9px;top:309.31px;width:56.6px;height:12.29px;line-height:12.29px;">AS 5100</div>
<div class="b" style="left:571.65px;top:309.31px;width:49.85px;height:12.29px;line-height:12.29px;">Eurocode 2</div>
<div class="b" style="left:801.9px;top:309.31px;width:39.35px;height:12.29px;line-height:12.29px;">BS 5400</div>
<div style="left:18px;top:321.6px;width:66.5px;height:12.29px;line-height:12.29px;">Phi.Vuc</div>
<div style="left:84.5px;top:321.6px;width:75.25px;height:12.29px;line-height:12.29px;text-align:right;">92.75</div>
<div style="left:163.15px;top:321.6px;width:39.35px;height:12.29px;line-height:12.29px;">kN</div>
<div style="left:244.65px;top:321.6px;width:75.85px;height:12.29px;line-height:12.29px;">Phi.Vuc</div>
<div style="left:320.5px;top:321.6px;width:56px;height:12.29px;line-height:12.29px;text-align:right;">86.57</div>
<div style="left:379.9px;top:321.6px;width:39.65px;height:12.29px;line-height:12.29px;">kN</div>
<div style="left:18px;top:333.9px;width:66.5px;height:12.29px;line-height:12.29px;">Phi.Vus</div>
<div style="left:84.5px;top:333.9px;width:75.25px;height:12.29px;line-height:12.29px;text-align:right;">489.14</div>
<div style="left:163.15px;top:333.9px;width:39.35px;height:12.29px;line-height:12.29px;">kN</div>
<div style="left:244.65px;top:333.9px;width:75.85px;height:12.29px;line-height:12.29px;">Phi.Vus</div>
<div style="left:320.5px;top:333.9px;width:56px;height:12.29px;line-height:12.29px;text-align:right;">456.53</div>
<div style="left:379.9px;top:333.9px;width:39.65px;height:12.29px;line-height:12.29px;">kN</div>
<div style="left:18px;top:346.19px;width:66.5px;height:12.29px;line-height:12.29px;">Phi.Vu</div>
<div style="left:84.5px;top:346.19px;width:75.25px;height:12.29px;line-height:12.29px;text-align:right;">581.88</div>
<div style="left:163.15px;top:346.19px;width:39.35px;height:12.29px;line-height:12.29px;">kN</div>
<div style="left:244.65px;top:346.19px;width:75.85px;height:12.29px;line-height:12.29px;">Phi.Vu</div>
<div style="left:320.5px;top:346.19px;width:56px;height:12.29px;line-height:12.29px;text-align:right;">543.09</div>
<div style="left:379.9px;top:346.19px;width:39.65px;height:12.29px;line-height:12.29px;">kN</div>
<div style="left:18px;top:358.48px;width:66.5px;height:12.29px;line-height:12.29px;">Ttd / PhiM (8.2.8)</div>
<div style="left:84.5px;top:358.48px;width:75.25px;height:12.29px;line-height:12.29px;text-align:right;">1020.04</div>
<div style="left:163.15px;top:358.48px;width:39.35px;height:12.29px;line-height:12.29px;">kN</div>
<div style="left:244.65px;top:358.48px;width:75.85px;height:12.29px;line-height:12.29px;">Ttd / PhiM (8.2.8)</div>
<div style="left:320.5px;top:358.48px;width:56px;height:12.29px;line-height:12.29px;text-align:right;">981.21</div>
<div style="left:379.9px;top:358.48px;width:39.65px;height:12.29px;line-height:12.29px;">kN</div>
<div style="left:18px;top:370.77px;width:66.5px;height:12.29px;line-height:12.29px;">Max steel tension</div>
<div style="left:84.5px;top:370.77px;width:75.25px;height:12.29px;line-height:12.29px;text-align:right;">1130.97</div>
<div style="left:163.15px;top:370.77px;width:39.35px;height:12.29px;line-height:12.29px;">kN</div>
<div style="left:244.65px;top:370.77px;width:75.85px;height:12.29px;line-height:12.29px;">Max steel tension</div>
<div style="left:320.5px;top:370.77px;width:56px;height:12.29px;line-height:12.29px;text-align:right;">1130.97</div>
<div style="left:379.9px;top:370.77px;width:39.65px;height:12.29px;line-height:12.29px;">kN</div>
<div style="left:18px;top:383.07px;width:66.5px;height:12.29px;line-height:12.29px;">Tcd / PhiM</div>
<div style="left:84.5px;top:383.07px;width:75.25px;height:12.29px;line-height:12.29px;text-align:right;">0.00</div>
<div style="left:163.15px;top:383.07px;width:39.35px;height:12.29px;line-height:12.29px;">kN</div>
<div style="left:244.65px;top:383.07px;width:75.85px;height:12.29px;line-height:12.29px;">Tcd / PhiM</div>
<div style="left:320.5px;top:383.07px;width:56px;height:12.29px;line-height:12.29px;text-align:right;">0.00</div>
<div style="left:379.9px;top:383.07px;width:39.65px;height:12.29px;line-height:12.29px;">kN</div>
<div style="left:18px;top:395.36px;width:66.5px;height:12.29px;line-height:12.29px;">Max tension in compression steel</div>
<div style="left:84.5px;top:395.36px;width:75.25px;height:12.29px;line-height:12.29px;text-align:right;">1130.97</div>
<div style="left:163.15px;top:395.36px;width:39.35px;height:12.29px;line-height:12.29px;">kN</div>
<div style="left:244.65px;top:395.36px;width:75.85px;height:12.29px;line-height:12.29px;">Max tension in compression steel</div>
<div style="left:320.5px;top:395.36px;width:56px;height:12.29px;line-height:12.29px;text-align:right;">1130.97</div>
<div style="left:379.9px;top:395.36px;width:39.65px;height:12.29px;line-height:12.29px;">kN</div>
<div style="left:18px;top:407.65px;width:66.5px;height:12.29px;line-height:12.29px;">Acp</div>
<div style="left:84.5px;top:407.65px;width:75.25px;height:12.29px;line-height:12.29px;text-align:right;">180000.00</div>
<div style="left:163.15px;top:407.65px;width:39.35px;height:12.29px;line-height:12.29px;">mm2</div>
<div style="left:244.65px;top:407.65px;width:75.85px;height:12.29px;line-height:12.29px;">Acp</div>
<div style="left:320.5px;top:407.65px;width:56px;height:12.29px;line-height:12.29px;text-align:right;">180000.00</div>
<div style="left:379.9px;top:407.65px;width:39.65px;height:12.29px;line-height:12.29px;">mm2</div>
<div style="left:18px;top:419.95px;width:66.5px;height:12.29px;line-height:12.29px;">Uc</div>
<div style="left:84.5px;top:419.95px;width:75.25px;height:12.29px;line-height:12.29px;text-align:right;">1800.00</div>
<div style="left:163.15px;top:419.95px;width:39.35px;height:12.29px;line-height:12.29px;">mm</div>
<div style="left:244.65px;top:419.95px;width:75.85px;height:12.29px;line-height:12.29px;">Uc</div>
<div style="left:320.5px;top:419.95px;width:56px;height:12.29px;line-height:12.29px;text-align:right;">1800.00</div>
<div style="left:379.9px;top:419.95px;width:39.65px;height:12.29px;line-height:12.29px;">mm</div>
<div style="left:18px;top:432.24px;width:66.5px;height:12.29px;line-height:12.29px;">Asvmin (8.2.1.7)</div>
<div style="left:84.5px;top:432.24px;width:75.25px;height:12.29px;line-height:12.29px;text-align:right;">54.31</div>
<div style="left:163.15px;top:432.24px;width:39.35px;height:12.29px;line-height:12.29px;">mm2</div>
<div style="left:244.65px;top:432.24px;width:75.85px;height:12.29px;line-height:12.29px;">Asvmin (8.2.5.5)</div>
<div style="left:320.5px;top:432.24px;width:56px;height:12.29px;line-height:12.29px;text-align:right;">80.64</div>
<div style="left:379.9px;top:432.24px;width:39.65px;height:12.29px;line-height:12.29px;">mm2</div>
<div style="left:18px;top:444.53px;width:66.5px;height:12.29px;line-height:12.29px;">Asv</div>
<div style="left:84.5px;top:444.53px;width:75.25px;height:12.29px;line-height:12.29px;text-align:right;">402.12</div>
<div style="left:163.15px;top:444.53px;width:39.35px;height:12.29px;line-height:12.29px;">mm2</div>
<div style="left:244.65px;top:444.53px;width:75.85px;height:12.29px;line-height:12.29px;">Asv</div>
<div style="left:320.5px;top:444.53px;width:56px;height:12.29px;line-height:12.29px;text-align:right;">402.12</div>
<div style="left:379.9px;top:444.53px;width:39.65px;height:12.29px;line-height:12.29px;">mm2</div>
<div style="left:18px;top:456.83px;width:66.5px;height:12.29px;line-height:12.29px;">Not used</div>
<div style="left:244.65px;top:456.83px;width:75.85px;height:12.29px;line-height:12.29px;">Not used</div>
<div style="left:18px;top:469.12px;width:66.5px;height:12.29px;line-height:12.29px;">N/A</div>
<div style="left:84.5px;top:469.12px;width:75.25px;height:12.29px;line-height:12.29px;text-align:right;">0.00</div>
<div style="left:244.65px;top:469.12px;width:75.85px;height:12.29px;line-height:12.29px;">N/A</div>
<div style="left:320.5px;top:469.12px;width:56px;height:12.29px;line-height:12.29px;text-align:right;">0.00</div>
<div style="left:161.75px;top:469.12px;width:38.75px;height:12.29px;line-height:12.29px;text-align:right;">0</div>
<div style="left:378.5px;top:469.12px;width:39.05px;height:12.29px;line-height:12.29px;text-align:right;">0</div>
<div class="bi" style="left:504.15px;top:51.05px;width:117.35px;height:13.1px;line-height:13.1px;overflow:visible;">Shear Reinforcement</div>
<div class="bi" style="left:745.15px;top:51.05px;width:218.35px;height:13.1px;line-height:13.1px;overflow:visible;">Shear Reinforcement for Eurocode and BS codes</div>
<div style="left:504.15px;top:63.45px;width:66.1px;height:12.29px;line-height:12.29px;">External lig dia</div>
<div style="left:571.65px;top:63.45px;width:49.85px;height:12.29px;line-height:12.29px;">Diast</div>
<div class="v" style="left:621.5px;top:63.45px;width:38.75px;height:12.29px;line-height:12.29px;text-align:right;">16.0</div>
<div style="left:663.65px;top:63.45px;width:39.35px;height:12.29px;line-height:12.29px;">mm</div>
<div style="left:745.15px;top:63.45px;width:55.35px;height:12.29px;line-height:12.29px;">External lig diameter</div>
<div style="left:801.9px;top:63.45px;width:39.35px;height:12.29px;line-height:12.29px;">Diast</div>
<div class="v" style="left:841.25px;top:63.45px;width:39.05px;height:12.29px;line-height:12.29px;text-align:right;">16.0</div>
<div style="left:883.4px;top:63.45px;width:39.35px;height:12.29px;line-height:12.29px;">mm</div>
<div style="left:504.15px;top:75.74px;width:66.1px;height:12.29px;line-height:12.29px;">Internal Tie diameter</div>
<div style="left:571.65px;top:75.74px;width:49.85px;height:12.29px;line-height:12.29px;">Dias</div>
<div class="v" style="left:621.5px;top:75.74px;width:38.75px;height:12.29px;line-height:12.29px;text-align:right;">0.0</div>
<div style="left:663.65px;top:75.74px;width:39.35px;height:12.29px;line-height:12.29px;">mm</div>
<div style="left:745.15px;top:75.74px;width:55.35px;height:12.29px;line-height:12.29px;">Internal Tie diameter</div>
<div style="left:801.9px;top:75.74px;width:39.35px;height:12.29px;line-height:12.29px;">Dias</div>
<div class="v" style="left:841.25px;top:75.74px;width:39.05px;height:12.29px;line-height:12.29px;text-align:right;">0.0</div>
<div style="left:883.4px;top:75.74px;width:39.35px;height:12.29px;line-height:12.29px;">mm</div>
<div style="left:504.15px;top:88.04px;width:66.1px;height:12.29px;line-height:12.29px;">Number of internal ties</div>
<div style="left:571.65px;top:88.04px;width:49.85px;height:12.29px;line-height:12.29px;">Nums</div>
<div class="v" style="left:621.5px;top:88.04px;width:38.75px;height:12.29px;line-height:12.29px;text-align:right;">0.0</div>
<div style="left:745.15px;top:88.04px;width:55.35px;height:12.29px;line-height:12.29px;">Number of internal ties</div>
<div style="left:801.9px;top:88.04px;width:39.35px;height:12.29px;line-height:12.29px;">Nums</div>
<div class="v" style="left:841.25px;top:88.04px;width:39.05px;height:12.29px;line-height:12.29px;text-align:right;">0.0</div>
<div style="left:504.15px;top:100.33px;width:66.1px;height:12.29px;line-height:12.29px;">Spacing</div>
<div style="left:571.65px;top:100.33px;width:49.85px;height:12.29px;line-height:12.29px;">s</div>
<div class="v" style="left:621.5px;top:100.33px;width:38.75px;height:12.29px;line-height:12.29px;text-align:right;">200.0</div>
<div style="left:663.65px;top:100.33px;width:39.35px;height:12.29px;line-height:12.29px;">mm</div>
<div style="left:745.15px;top:100.33px;width:55.35px;height:12.29px;line-height:12.29px;">Spacing</div>
<div style="left:801.9px;top:100.33px;width:39.35px;height:12.29px;line-height:12.29px;">s</div>
<div class="v" style="left:841.25px;top:100.33px;width:39.05px;height:12.29px;line-height:12.29px;text-align:right;">200.0</div>
<div style="left:883.4px;top:100.33px;width:39.35px;height:12.29px;line-height:12.29px;">mm</div>
<div style="left:504.15px;top:112.62px;width:66.1px;height:12.29px;line-height:12.29px;">Yield stress</div>
<div style="left:571.65px;top:112.62px;width:49.85px;height:12.29px;line-height:12.29px;">fysv</div>
<div class="v" style="left:621.5px;top:112.62px;width:38.75px;height:12.29px;line-height:12.29px;text-align:right;">500.0</div>
<div style="left:663.65px;top:112.62px;width:39.35px;height:12.29px;line-height:12.29px;">MPa</div>
<div style="left:745.15px;top:112.62px;width:55.35px;height:12.29px;line-height:12.29px;">Yield stress</div>
<div style="left:801.9px;top:112.62px;width:39.35px;height:12.29px;line-height:12.29px;">fysv</div>
<div class="v" style="left:841.25px;top:112.62px;width:39.05px;height:12.29px;line-height:12.29px;text-align:right;">500.0</div>
<div style="left:883.4px;top:112.62px;width:39.35px;height:12.29px;line-height:12.29px;">MPa</div>
<div style="left:504.15px;top:124.91px;width:66.1px;height:12.29px;line-height:12.29px;">Phiv</div>
<div style="left:745.15px;top:124.91px;width:55.35px;height:12.29px;line-height:12.29px;">Shear steel reduction factor</div>
<div style="left:801.9px;top:124.91px;width:39.35px;height:12.29px;line-height:12.29px;">γm</div>
<div style="left:504.15px;top:137.21px;width:66.1px;height:12.29px;line-height:12.29px;">Side cover</div>
<div style="left:571.65px;top:137.21px;width:49.85px;height:12.29px;line-height:12.29px;">Covs</div>
<div class="v" style="left:621.5px;top:137.21px;width:38.75px;height:12.29px;line-height:12.29px;text-align:right;">40.00</div>
<div style="left:663.65px;top:137.21px;width:39.35px;height:12.29px;line-height:12.29px;">mm</div>
<div style="left:745.15px;top:137.21px;width:55.35px;height:12.29px;line-height:12.29px;">Side cover</div>
<div style="left:801.9px;top:137.21px;width:39.35px;height:12.29px;line-height:12.29px;">Covs</div>
<div class="v" style="left:841.25px;top:137.21px;width:39.05px;height:12.29px;line-height:12.29px;text-align:right;">50.00</div>
<div style="left:883.4px;top:137.21px;width:39.35px;height:12.29px;line-height:12.29px;">mm</div>
<div style="left:504.15px;top:149.5px;width:66.1px;height:12.29px;line-height:12.29px;">Max nominal agg.</div>
<div style="left:571.65px;top:149.5px;width:49.85px;height:12.29px;line-height:12.29px;">Dg</div>
<div class="v" style="left:621.5px;top:149.5px;width:38.75px;height:12.29px;line-height:12.29px;text-align:right;">20.00</div>
<div style="left:663.65px;top:149.5px;width:39.35px;height:12.29px;line-height:12.29px;">mm</div>
<div style="left:745.15px;top:149.5px;width:55.35px;height:12.29px;line-height:12.29px;">Max fcu for shear</div>
<div style="left:801.9px;top:149.5px;width:39.35px;height:12.29px;line-height:12.29px;">fcumax</div>
<div class="v" style="left:841.25px;top:149.5px;width:39.05px;height:12.29px;line-height:12.29px;text-align:right;">50.00</div>
<div style="left:504.15px;top:161.79px;width:66.1px;height:12.29px;line-height:12.29px;">Use simplified</div>
<div style="left:745.15px;top:161.79px;width:55.35px;height:12.29px;line-height:12.29px;">Cot(strut angle)</div>
<div style="left:801.9px;top:161.79px;width:39.35px;height:12.29px;line-height:12.29px;">Cotθ</div>
<div style="left:745.15px;top:174.09px;width:55.35px;height:12.29px;line-height:12.29px;">Maximum moment</div>
<div style="left:801.9px;top:174.09px;width:39.35px;height:12.29px;line-height:12.29px;">Med,max</div>
<div class="v" style="left:841.25px;top:174.09px;width:39.05px;height:12.29px;line-height:12.29px;text-align:right;">350.0</div>
<div class="v" style="left:621.5px;top:161.79px;width:40.75px;height:12.29px;line-height:12.29px;text-align:center;letter-spacing:-0.3px;">FALSE</div>
<div style="left:663.65px;top:124.91px;width:80.1px;height:12.29px;line-height:12.29px;">Default = 0.75 if more than</div>
<div style="left:883.4px;top:124.91px;width:80.1px;height:12.29px;line-height:12.29px;overflow:visible;">Default = 1.25</div>
<div style="left:883.4px;top:149.5px;width:161.6px;height:12.29px;line-height:12.29px;overflow:visible;letter-spacing:-0.22px;">Default EC2 = 50, BS5400 = 40 MPa</div>
<div style="left:883.4px;top:174.09px;width:80.1px;height:12.29px;line-height:12.29px;overflow:visible;">kNm, EC2 only</div>
<div style="left:922.75px;top:63.45px;width:38.75px;height:12.29px;line-height:12.29px;text-align:right;">2010.619</div>
<div style="left:504.15px;top:321.6px;width:66.1px;height:12.29px;line-height:12.29px;">Vc</div>
<div style="left:570.25px;top:321.6px;width:49.25px;height:12.29px;line-height:12.29px;text-align:right;">110.77</div>
<div style="left:745.15px;top:321.6px;width:55.35px;height:12.29px;line-height:12.29px;">Vc</div>
<div style="left:800.5px;top:321.6px;width:39.15px;height:12.29px;line-height:12.29px;text-align:right;">121.61</div>
<div style="left:504.15px;top:333.9px;width:66.1px;height:12.29px;line-height:12.29px;">Vs</div>
<div style="left:570.25px;top:333.9px;width:49.25px;height:12.29px;line-height:12.29px;text-align:right;">641.17</div>
<div style="left:745.15px;top:333.9px;width:55.35px;height:12.29px;line-height:12.29px;">Vs</div>
<div style="left:800.5px;top:333.9px;width:39.15px;height:12.29px;line-height:12.29px;text-align:right;">405.99</div>
<div style="left:504.15px;top:346.19px;width:66.1px;height:12.29px;line-height:12.29px;">Vu</div>
<div style="left:570.25px;top:346.19px;width:49.25px;height:12.29px;line-height:12.29px;text-align:right;">641.17</div>
<div style="left:745.15px;top:346.19px;width:55.35px;height:12.29px;line-height:12.29px;">Vu</div>
<div style="left:800.5px;top:346.19px;width:39.15px;height:12.29px;line-height:12.29px;text-align:right;">527.60</div>
<div style="left:504.15px;top:358.48px;width:66.1px;height:12.29px;line-height:12.29px;">Vumax</div>
<div style="left:570.25px;top:358.48px;width:49.25px;height:12.29px;line-height:12.29px;text-align:right;">641.17</div>
<div style="left:745.15px;top:358.48px;width:55.35px;height:12.29px;line-height:12.29px;">Vumax</div>
<div style="left:800.5px;top:358.48px;width:39.15px;height:12.29px;line-height:12.29px;text-align:right;">684.76</div>
<div style="left:504.15px;top:370.77px;width:66.1px;height:12.29px;line-height:12.29px;">Add. Long force</div>
<div style="left:570.25px;top:370.77px;width:49.25px;height:12.29px;line-height:12.29px;text-align:right;">309.79</div>
<div style="left:745.15px;top:370.77px;width:55.35px;height:12.29px;line-height:12.29px;">Add. Long force</div>
<div style="left:800.5px;top:370.77px;width:39.15px;height:12.29px;line-height:12.29px;text-align:right;">250.00</div>
<div style="left:504.15px;top:383.07px;width:66.1px;height:12.29px;line-height:12.29px;">% steel</div>
<div style="left:570.25px;top:383.07px;width:49.25px;height:12.29px;line-height:12.29px;text-align:right;">1.40</div>
<div style="left:745.15px;top:383.07px;width:55.35px;height:12.29px;line-height:12.29px;">% steel</div>
<div style="left:800.5px;top:383.07px;width:39.15px;height:12.29px;line-height:12.29px;text-align:right;">1.40</div>
<div style="left:504.15px;top:395.36px;width:66.1px;height:12.29px;line-height:12.29px;">Depth factor</div>
<div style="left:570.25px;top:395.36px;width:49.25px;height:12.29px;line-height:12.29px;text-align:right;">1.61</div>
<div style="left:745.15px;top:395.36px;width:55.35px;height:12.29px;line-height:12.29px;">Depth factor</div>
<div style="left:800.5px;top:395.36px;width:39.15px;height:12.29px;line-height:12.29px;text-align:right;">0.98</div>
<div style="left:504.15px;top:407.65px;width:66.1px;height:12.29px;line-height:12.29px;">Conc shear stress</div>
<div style="left:570.25px;top:407.65px;width:49.25px;height:12.29px;line-height:12.29px;text-align:right;">0.69</div>
<div style="left:745.15px;top:407.65px;width:55.35px;height:12.29px;line-height:12.29px;">Conc shear stress</div>
<div style="left:800.5px;top:407.65px;width:39.15px;height:12.29px;line-height:12.29px;text-align:right;">0.77</div>
<div style="left:504.15px;top:419.95px;width:66.1px;height:12.29px;line-height:12.29px;">Min shear steel</div>
<div style="left:570.25px;top:419.95px;width:49.25px;height:12.29px;line-height:12.29px;text-align:right;">60.00</div>
<div style="left:745.15px;top:419.95px;width:55.35px;height:12.29px;line-height:12.29px;">Min shear steel</div>
<div style="left:800.5px;top:419.95px;width:39.15px;height:12.29px;line-height:12.29px;text-align:right;">60.00</div>
<div style="left:504.15px;top:432.24px;width:66.1px;height:12.29px;line-height:12.29px;">Shear steel provided</div>
<div style="left:570.25px;top:432.24px;width:49.25px;height:12.29px;line-height:12.29px;text-align:right;">402.12</div>
<div style="left:745.15px;top:432.24px;width:55.35px;height:12.29px;line-height:12.29px;">Shear steel provided</div>
<div style="left:800.5px;top:432.24px;width:39.15px;height:12.29px;line-height:12.29px;text-align:right;">402.12</div>
<div style="left:504.15px;top:444.53px;width:66.1px;height:12.29px;line-height:12.29px;">Cot Theta</div>
<div style="left:570.25px;top:444.53px;width:49.25px;height:12.29px;line-height:12.29px;text-align:right;">1.51</div>
</div></body></html>
